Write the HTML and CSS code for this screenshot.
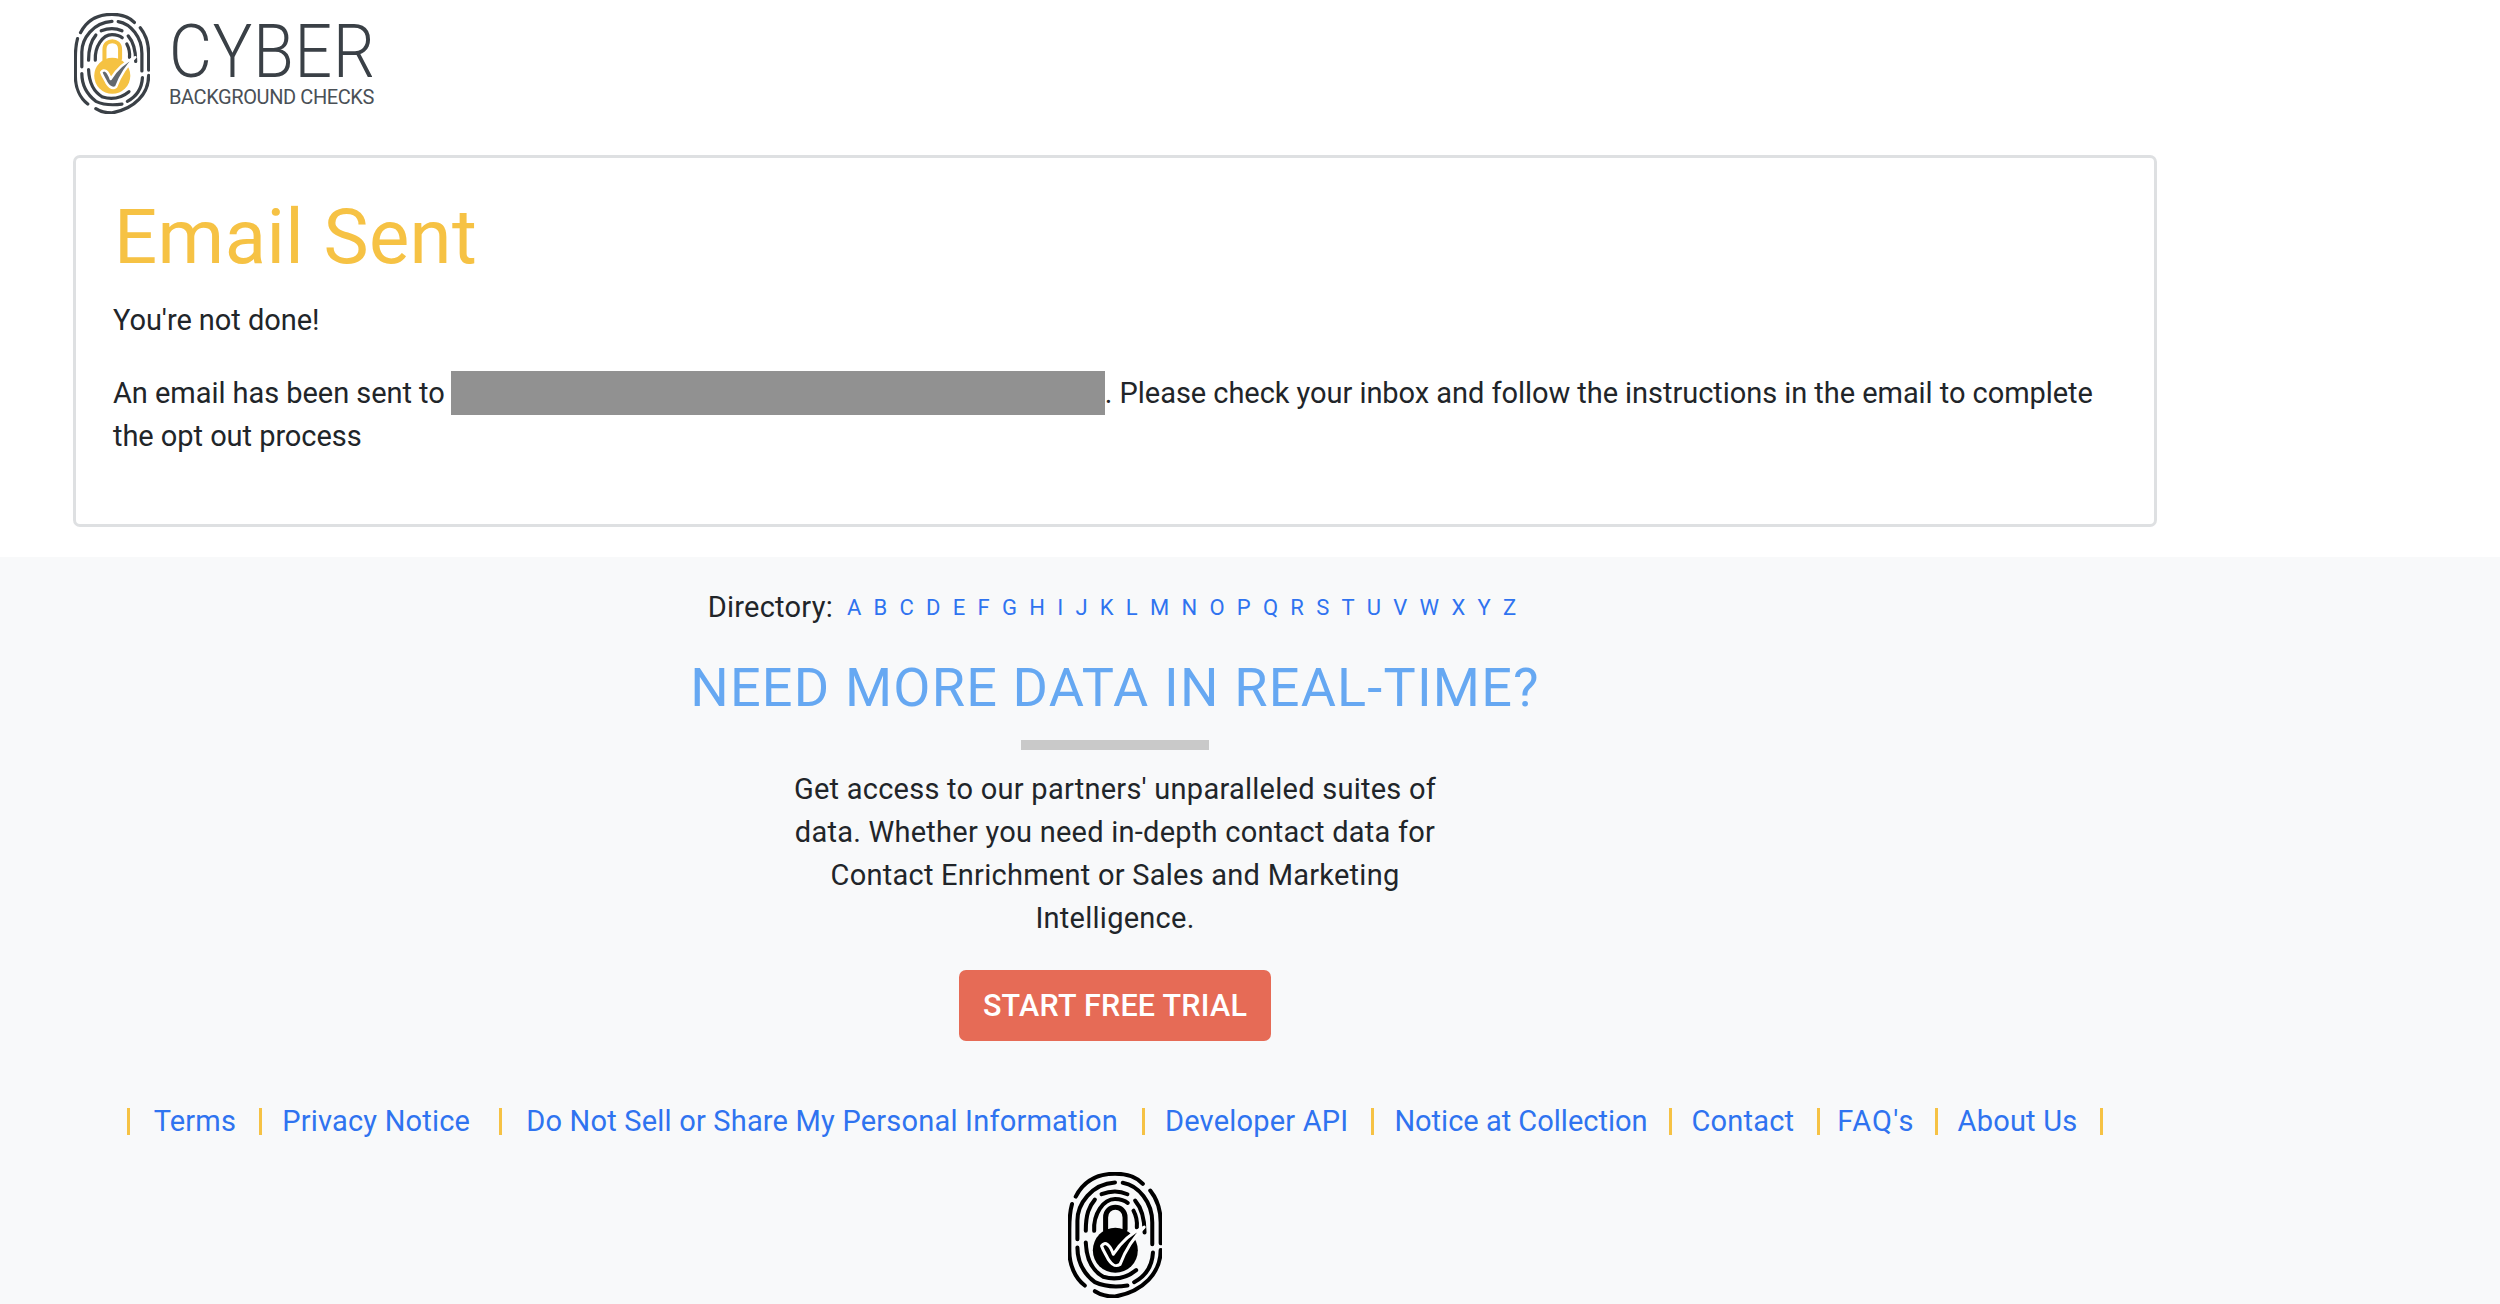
FILE: index.html
```html
<!DOCTYPE html>
<html lang="en">
<head>
    <meta charset="UTF-8">
    <meta name="viewport" content="width=device-width, initial-scale=1.0">
    <title>Email Sent</title>
    <link rel="stylesheet" href="styles.css">
</head>
<body>
    <svg class="defs" width="0" height="0">
        <symbol id="print" viewBox="85 70 280 375">
            <g class="print-lines">
                <path d="M108 143C130 100 170 75 225 75C260 75 290 85 308 105"/>
                <path d="M330 125C350 150 361 180 361 220V282"/>
                <path d="M361 302C361 370 310 425 225 441C200 441 180 435 165 425"/>
                <path d="M97 165C90 190 89 210 89 240V305C89 345 105 385 135 408"/>
                <path d="M113 270V215C113 165 155 105 225 101"/>
                <path d="M248 102C295 110 336 160 336 220V285"/>
                <path d="M113 295C113 340 135 375 165 398C195 412 235 412 262 408"/>
                <path d="M282 398C320 378 336 345 338 310"/>
                <path d="M138 245C138 195 148 172 165 152"/>
                <path d="M185 136C210 126 240 126 262 136"/>
                <path d="M285 155C305 178 313 205 313 250"/>
                <path d="M138 280C140 330 160 365 190 382C225 392 260 385 288 362"/>
                <path d="M163 245C160 195 190 150 225 150C245 150 255 155 263 162"/>
                <path d="M280 185C288 200 292 215 290 235"/>
                <path class="shackle" d="M197 245V205C197 165 255 165 255 205V240"/>
            </g>
            <circle class="lock" cx="226" cy="303" r="67"/>
            <path class="tick" d="M185 290C195 275 210 285 220 315C245 275 275 250 312 234C280 265 255 305 240 345C225 355 215 345 205 330C198 315 190 305 185 290Z"/>
        </symbol>
    </svg>

    <div class="page">
        <header class="brand">
            <svg class="brand-mark"><use href="#print"/></svg>
            <div class="brand-text">
                <span class="brand-name">CYBER</span>
                <span class="brand-sub">BACKGROUND CHECKS</span>
            </div>
        </header>

        <main class="notice">
            <h1>Email Sent</h1>
            <p>You're not done!</p>
            <p class="notice-msg">An email has been sent to <span class="redacted"></span>. Please check your inbox and follow the instructions in the email to complete the opt out process</p>
        </main>
    </div>

    <footer class="site-footer">
        <div class="page footer-inner">
            <div class="directory">
                <span class="directory-label">Directory:</span>
                <a>A</a><a>B</a><a>C</a><a>D</a><a>E</a><a>F</a><a>G</a><a>H</a><a>I</a><a>J</a><a>K</a><a>L</a><a>M</a><a>N</a><a>O</a><a>P</a><a>Q</a><a>R</a><a>S</a><a>T</a><a>U</a><a>V</a><a>W</a><a>X</a><a>Y</a><a>Z</a>
            </div>
            <h2>NEED MORE DATA IN REAL-TIME?</h2>
            <div class="rule"></div>
            <p class="blurb">Get access to our partners' unparalleled suites of data. Whether you need in-depth contact data for Contact Enrichment or Sales and Marketing Intelligence.</p>
            <a class="trial-btn">START FREE TRIAL</a>
            <nav class="links">
                <i></i><a class="first">Terms</a>
                <i></i><a class="privacy">Privacy Notice</a>
                <i></i><a class="donotsell">Do Not Sell or Share My Personal Information</a>
                <i></i><a>Developer API</a>
                <i></i><a class="collection">Notice at Collection</a>
                <i></i><a>Contact</a>
                <i></i><a class="faq">FAQ's</a>
                <i></i><a>About Us</a>
                <i></i>
            </nav>
            <svg class="footer-mark"><use href="#print"/></svg>
        </div>
    </footer>
</body>
</html>
```

FILE: styles.css
```css
html, body {
    margin: 0;
    padding: 0;
}
body {
    font-family: "Roboto", "Noto Sans", sans-serif;
    font-size: 29px;
    line-height: 43px;
    letter-spacing: .25px;
    color: #212529;
    background: #fff;
    height: 1304px;
    overflow: hidden;
}
.defs {
    display: block;
    height: 0;
}
.page {
    width: 2230px;
    padding: 0 73px;
    box-sizing: border-box;
}
.print-lines path {
    fill: none;
    stroke: var(--line);
    stroke-width: 12;
    stroke-linecap: round;
}
.print-lines .shackle {
    stroke: var(--lock);
    stroke-width: 15;
}
.lock {
    fill: var(--lock);
}
.tick {
    fill: var(--tick);
    stroke: #fff;
    stroke-width: 9;
    stroke-linejoin: round;
}

/* logo */
.brand {
    display: flex;
    align-items: flex-start;
    height: 155px;
    padding-top: 13px;
    box-sizing: border-box;
    --line: #3a4046;
    --lock: #f5c242;
    --tick: #62686e;
}
.brand-mark {
    width: 76px;
    height: 101px;
    margin: 0 19px 0 1px;
}
.brand-text {
    display: flex;
    flex-direction: column;
    align-items: flex-start;
}
.brand-name {
    font-size: 75px;
    line-height: 62px;
    margin-top: 7px;
    font-weight: 300;
    letter-spacing: 1px;
    color: #3a4046;
    transform: scaleX(.88);
    transform-origin: left;
}
.brand-sub {
    font-size: 20px;
    line-height: 24px;
    margin-top: 3px;
    letter-spacing: -.4px;
    color: #4a5056;
}

/* card */
.notice {
    border: 3px solid #dee0e2;
    border-radius: 7px;
    height: 372px;
    box-sizing: border-box;
    padding: 34px 39px 0 37px;
    letter-spacing: -.05px;
}
.notice h1 {
    margin: 0 0 0 1px;
    font-size: 76px;
    line-height: 90px;
    font-weight: 400;
    letter-spacing: .4px;
    color: #f6c244;
}
.notice p {
    margin: 0;
    padding-top: 17px;
}
.notice .notice-msg {
    padding-top: 30px;
}
.redacted {
    display: inline-block;
    width: 654px;
    height: 44px;
    margin: -4px 0 -4px -1px;
    background: #919191;
    vertical-align: -8px;
}

/* footer */
.site-footer {
    margin-top: 30px;
    background: #f8f9fa;
    height: 747px;
}
.footer-inner {
    display: flex;
    flex-direction: column;
    align-items: center;
    padding: 28px 0 0;
}
.directory {
    display: flex;
    align-items: center;
    height: 44px;
}
.directory-label {
    margin-right: 8px;
}
.directory a {
    color: #2f73f0;
    font-size: 22px;
    margin: 0 6px;
}
h2 {
    margin: 24px 0 0;
    font-size: 54px;
    line-height: 70px;
    font-weight: 400;
    letter-spacing: 1.2px;
    color: #66a8f2;
}
.rule {
    width: 188px;
    height: 10px;
    background: #c9c9c9;
    margin: 17px 0 18px;
}
.blurb {
    margin: 0;
    width: 670px;
    text-align: center;
}
.trial-btn {
    margin-top: 30px;
    background: #e66b56;
    color: #fff;
    font-weight: 500;
    font-size: 30.5px;
    line-height: 71px;
    padding: 0 24px;
    border-radius: 7px;
}
.links {
    display: flex;
    align-items: center;
    margin-top: 58px;
    height: 44px;
    letter-spacing: .2px;
}
.links a {
    color: #2f73f0;
    margin: 0 23px 0 20px;
}
.links a.first {
    margin-left: 24px;
}
.links a.privacy {
    margin-right: 29px;
}
.links a.donotsell {
    margin: 0 24px 0 24px;
}
.links a.collection {
    margin-right: 21px;
    letter-spacing: 0;
}
.links a.faq {
    margin: 0 20px 0 17px;
    letter-spacing: 1.2px;
}
.links i {
    display: block;
    width: 3px;
    height: 27px;
    background: #f6c244;
}
.footer-mark {
    width: 94px;
    height: 126px;
    margin-top: 29px;
    --line: #000;
    --lock: #000;
    --tick: #000;
}
```
